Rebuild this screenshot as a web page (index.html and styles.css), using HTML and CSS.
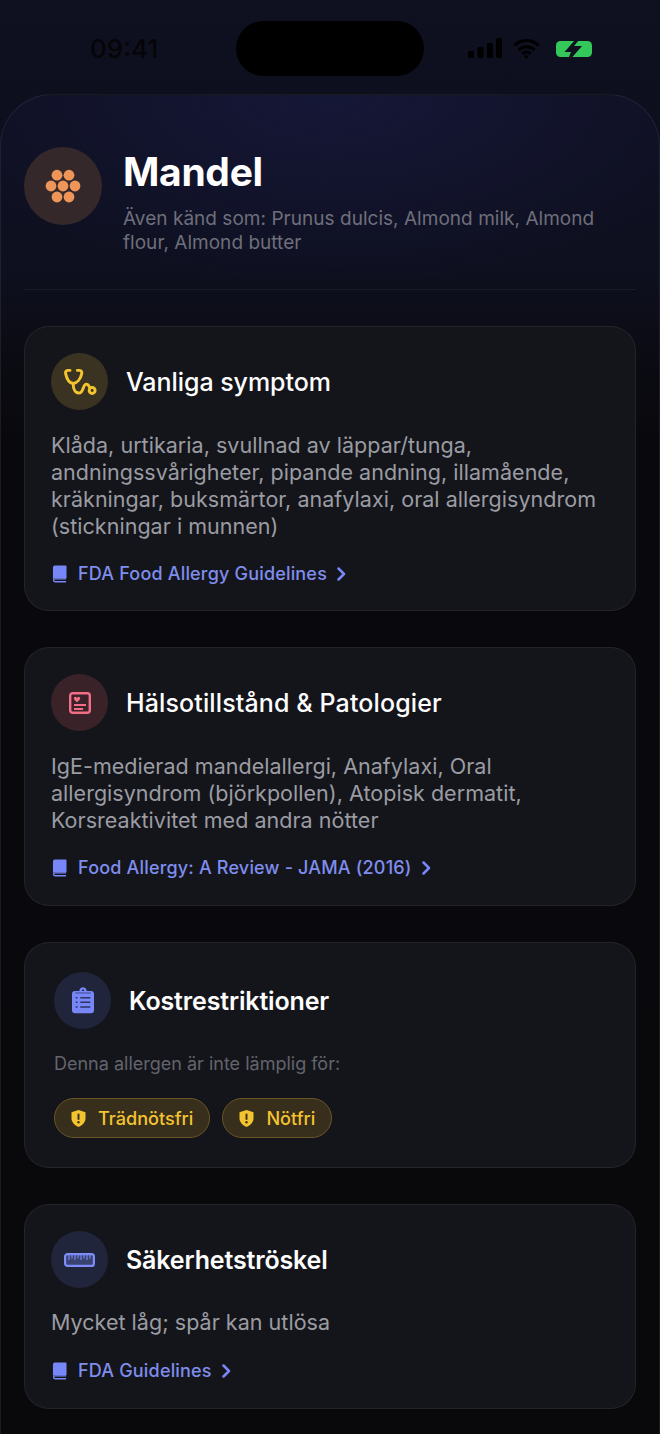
FILE: index.html
```html
<!DOCTYPE html>
<html lang="sv">
<head>
<meta charset="utf-8">
<title>Mandel</title>
<link rel="stylesheet" href="styles.css">
</head>
<body>
<div class="status">
  <span class="time">09:41</span>
  <span class="island"></span>
  <span class="sys">
    <svg width="34" height="21" viewBox="0 0 34 21"><rect x="0" y="13" width="6" height="7" rx="1.5"/><rect x="9.500" y="9" width="6" height="11" rx="1.500"/><rect x="19" y="5" width="6" height="15" rx="1.500"/><rect x="28" y="0" width="6" height="20" rx="1.500"/></svg>
    <svg class="wifi" width="27" height="20" viewBox="0 0 27 20"><path d="M1.500 6.500a17 17 0 0 1 24 0M5.500 11a11.500 11.500 0 0 1 16 0M9.300 14.800a6 6 0 0 1 8.400 0" fill="none" stroke="#000" stroke-width="3"/><path d="M10.500 16.500h6L13.500 20z"/></svg>
    <svg class="batt" width="36" height="16" viewBox="0 0 36 16"><rect width="36" height="16" rx="4.500" fill="#34c759"/><path fill="#0f1020" d="M19 -1H23L18 5H26L15.500 17H12.500L15 11H8.500z"/></svg>
  </span>
</div>
<main class="sheet">
  <header class="head">
    <div class="avatar">
      <svg width="36" height="36" viewBox="0 0 36 36" fill="#ee9659"><circle cx="12" cy="7.200" r="5.400"/><circle cx="24" cy="7.200" r="5.400"/><circle cx="6" cy="18" r="5.400"/><circle cx="18" cy="18" r="5.400"/><circle cx="30" cy="18" r="5.400"/><circle cx="12" cy="29" r="5.400"/><circle cx="24" cy="29" r="5.400"/></svg>
    </div>
    <div class="head-text">
      <h1>Mandel</h1>
      <p>Även känd som: Prunus dulcis, Almond milk, Almond flour, Almond butter</p>
    </div>
  </header>

  <section class="card c1">
    <div class="card-head">
      <span class="ic ic-yellow">
        <svg width="38" height="38" viewBox="0 0 36 36" fill="none" stroke="#f4c430" stroke-width="2.800" stroke-linecap="round" stroke-linejoin="round"><path d="M8.500 7H6.500C4.500 7 4 8.500 4.500 10.500C5.500 15 8 19 11.500 19.500C15.500 19 18.500 15 19.500 10.500C20 8.500 19.500 7 17.500 7H15.500"/><path d="M11.500 19.500C11.500 24.500 13.500 28.500 17 28.500C21.500 28.500 20.500 20 24 20C26.500 20 26.500 23 27.500 23.500"/><circle cx="29.500" cy="26" r="2.800"/></svg>
      </span>
      <h2>Vanliga symptom</h2>
    </div>
    <p class="body">Klåda, urtikaria, svullnad av läppar/tunga, andningssvårigheter, pipande andning, illamående, kräkningar, buksmärtor, anafylaxi, oral allergisyndrom (stickningar i munnen)</p>
    <a class="link"><svg class="book" width="15" height="18" viewBox="0 0 16 18"><use href="#book"/></svg>FDA Food Allergy Guidelines<svg class="chev" width="10" height="14" viewBox="0 0 10 14"><use href="#chev"/></svg></a>
  </section>

  <section class="card c2">
    <div class="card-head">
      <span class="ic ic-pink">
        <svg width="24" height="24" viewBox="0 0 24 24" fill="none" stroke="#f26d85"><rect x="2.200" y="2.200" width="19.600" height="19.600" rx="2.500" stroke-width="2.400"/><path d="M6 6.500c1-1.200 2.300-.6 3 .4.700-1 2-1.600 3-.4 1 1.400-.8 3-3 4.700-2.200-1.700-4-3.300-3-4.700z" fill="#f26d85" stroke="none"/><path d="M6 14h12M6 18h9" stroke-width="1.800"/></svg>
      </span>
      <h2>Hälsotillstånd &amp; Patologier</h2>
    </div>
    <p class="body">IgE-medierad mandelallergi, Anafylaxi, Oral allergisyndrom (björkpollen), Atopisk dermatit, Korsreaktivitet med andra nötter</p>
    <a class="link"><svg class="book" width="15" height="18" viewBox="0 0 16 18"><use href="#book"/></svg>Food Allergy: A Review - JAMA (2016)<svg class="chev" width="10" height="14" viewBox="0 0 10 14"><use href="#chev"/></svg></a>
  </section>

  <section class="card c3">
    <div class="card-head">
      <span class="ic ic-blue">
        <svg width="22" height="29" viewBox="0 0 24 30"><path fill="#7787f7" d="M8 4.500C8 2 10 .5 12 .5s4 1.500 4 4h5c1.700 0 3 1.300 3 3V26c0 1.700-1.300 3-3 3H3c-1.700 0-3-1.300-3-3V7.500c0-1.700 1.300-3 3-3z"/><path d="M11 3.800h2" stroke="#1f2542" stroke-width="1.600"/><path d="M3.500 6.800h17" stroke="#3b4585" stroke-width="1"/><path d="M4 12h2M9 12h11M4 17h2M9 17h11M4 22h2M9 22h11" stroke="#2d3462" stroke-width="1.700"/></svg>
      </span>
      <h2>Kostrestriktioner</h2>
    </div>
    <p class="note">Denna allergen är inte lämplig för:</p>
    <div class="chips">
      <span class="chip"><svg width="15" height="17" viewBox="0 0 15 17"><use href="#shield"/></svg>Trädnötsfri</span>
      <span class="chip"><svg width="15" height="17" viewBox="0 0 15 17"><use href="#shield"/></svg>Nötfri</span>
    </div>
  </section>

  <section class="card c4">
    <div class="card-head">
      <span class="ic ic-blue">
        <svg width="31" height="14" viewBox="0 0 31 14" fill="#3a4272" stroke="#7d8cf8"><rect x="1.100" y="1.100" width="28.800" height="11.800" rx="2.500" stroke-width="2.200"/><path d="M5 2v5M8 2v3.500M11 2v5M14 2v3.500M17 2v5M20 2v3.500M23 2v5M26 2v3.500" stroke-width="1.100"/></svg>
      </span>
      <h2>Säkerhetströskel</h2>
    </div>
    <p class="body">Mycket låg; spår kan utlösa</p>
    <a class="link"><svg class="book" width="15" height="18" viewBox="0 0 16 18"><use href="#book"/></svg>FDA Guidelines<svg class="chev" width="10" height="14" viewBox="0 0 10 14"><use href="#chev"/></svg></a>
  </section>
</main>

<svg class="defs" width="0" height="0">
  <defs>
    <g id="book"><path fill="#7787f7" d="M3 0h11.500c.6 0 1 .4 1 1v12.500H3c-1 0-1.700.4-2 1V3C1 1.300 1.500 0 3 0z"/><path fill="none" stroke="#7787f7" stroke-width="1.500" d="M15 14.200H3.200c-2 0-2 3 0 3H15"/></g>
    <path id="chev" fill="none" stroke="#7787f7" stroke-width="2.500" stroke-linecap="round" stroke-linejoin="round" d="M2.500 1.500L8 7l-5.500 5.500"/>
    <g id="shield"><path fill="#f4c430" d="M7.500 0l7 2.300v6c0 4-3 7-7 8.700-4-1.700-7-4.700-7-8.700v-6z"/><path stroke="#3d321a" stroke-width="2" stroke-linecap="round" d="M7.500 4.500v4.500"/><circle cx="7.500" cy="12.300" r="1.200" fill="#3d321a"/></g>
  </defs>
</svg>
</body>
</html>
```
FILE: styles.css
```css
* { box-sizing: border-box; margin: 0; padding: 0; }
html, body { height: 1434px; overflow: hidden; }
body {
  font-family: Inter, "Noto Sans", sans-serif;
  background: linear-gradient(180deg, #0f1020 0, #0d0e1a 300px, #08080c 1000px);
  color: #fff;
  width: 660px;
}
.defs { position: absolute; }
.status {
  height: 94px;
  padding: 21px 68px 0 90px;
  display: flex;
  justify-content: space-between;
  position: relative;
}
.time { font-size: 26px; font-weight: 500; color: #050508; line-height: 55px; }
.island {
  position: absolute;
  left: 236px; top: 21px;
  width: 188px; height: 55px;
  border-radius: 28px;
  background: #000;
}
.sys { display: flex; align-items: center; gap: 11px; height: 55px; }
.sys svg { fill: #000; }
.sys .batt { margin-left: 5px; }

.sheet {
  height: 1340px;
  border: 1px solid rgba(255,255,255,.07);
  border-bottom: 0;
  border-radius: 52px 52px 0 0;
  padding: 0 23px;
  background:
    radial-gradient(ellipse 400px 190px at 50% 0, rgba(26,28,70,.6), rgba(26,28,70,0) 100%),
    linear-gradient(180deg, #0f1022 0, #0e1020 170px, #0b0c14 250px, #09090d 340px, #09090c 100%);
  display: flex;
  flex-direction: column;
}
.head {
  display: flex;
  gap: 21px;
  padding-top: 52px;
  height: 195px;
  border-bottom: 1px solid rgba(255,255,255,.055);
  margin-bottom: 36px;
  flex: none;
}
.avatar {
  width: 78px; height: 78px; flex: none;
  border-radius: 50%;
  background: #35282a;
  display: flex; align-items: center; justify-content: center;
}
.head-text { padding-top: 1px; }
h1 { font-size: 39px; font-weight: 700; line-height: 47px; letter-spacing: -.3px; margin-bottom: 12px; }
.head-text p { font-size: 19px; line-height: 24px; letter-spacing: .03px; color: #6e6f7b; }

.card {
  background: #14151a;
  border: 1px solid rgba(255,255,255,.07);
  border-radius: 25px;
  margin-bottom: 36px;
  padding: 26px;
  flex: none;
}
.c1 { height: 285px; }
.c2 { height: 259px; }
.c3 { height: 226px; padding: 29px; }
.c4 { height: 205px; }
.card-head { display: flex; align-items: center; gap: 18px; }
.ic {
  width: 57px; height: 57px; flex: none; border-radius: 50%;
  display: flex; align-items: center; justify-content: center;
}
.ic-yellow { background: #3a3321; }
.ic-pink { background: #3a2229; }
.ic-blue { background: #20253c; }
h2 { font-size: 25px; font-weight: 600; line-height: 30px; letter-spacing: -.15px; color: #fdfdfe; }
.c1 h2, .c2 h2 { font-weight: 550; letter-spacing: -.05px; }
.c2 h2 { letter-spacing: .12px; }
.body { font-size: 21.500px; line-height: 27px; letter-spacing: .03px; color: #9b9ca3; margin-top: 22px; }
.c4 .body { margin-top: 21px; }
.link {
  display: flex; align-items: center;
  font-size: 18px; font-weight: 500; line-height: 24px; color: #7f8dee;
  margin-top: 22px; letter-spacing: .18px;
}
.c4 .link { margin-top: 23px; }
.book { margin: 0 11px 0 1px; flex: none; }
.chev { margin-left: 9px; flex: none; }
.note { font-size: 18px; line-height: 22px; color: #63646d; margin-top: 24px; }
.chips { display: flex; gap: 12px; margin-top: 23px; }
.chip {
  display: flex; align-items: center; gap: 12px;
  height: 40px; padding: 0 16px;
  border-radius: 20px;
  background: #372e1b;
  border: 1px solid #6a5526;
  color: #f4c430;
  font-size: 18.100px; font-weight: 500;
}
```
